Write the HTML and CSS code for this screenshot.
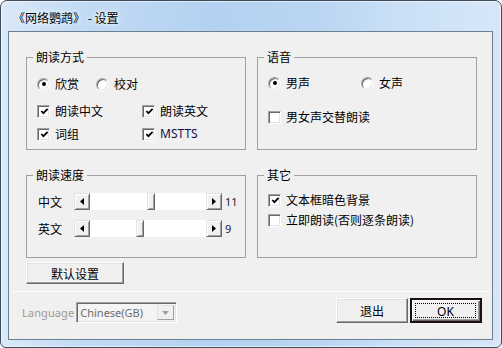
FILE: index.html
```html
<!DOCTYPE html>
<html lang="zh-CN">
<head>
    <meta charset="UTF-8">
    <title>《网络鹦鹉》 - 设置</title>
    <link rel="stylesheet" href="styles.css">
</head>
<body>
    <div class="window">
        <div class="titlebar">
            <span class="title">《网络鹦鹉》 - 设置</span>
        </div>
        <div class="client">
            <div class="groups">
                <!-- 朗读方式 -->
                <fieldset class="group">
                    <legend>朗读方式</legend>
                    <div class="gbody mode">
                        <div class="radios">
                            <label class="opt w59"><span class="radio on"><span class="dot"></span></span>欣赏</label>
                            <label class="opt"><span class="radio"></span>校对</label>
                        </div>
                        <div class="checks">
                            <label class="opt"><span class="check"><svg viewBox="0 0 9 9"><polyline points="1.3,4 3.4,6.2 7.6,1.8"/></svg></span>朗读中文</label>
                            <label class="opt"><span class="check"><svg viewBox="0 0 9 9"><polyline points="1.3,4 3.4,6.2 7.6,1.8"/></svg></span>朗读英文</label>
                            <label class="opt"><span class="check"><svg viewBox="0 0 9 9"><polyline points="1.3,4 3.4,6.2 7.6,1.8"/></svg></span>词组</label>
                            <label class="opt"><span class="check"><svg viewBox="0 0 9 9"><polyline points="1.3,4 3.4,6.2 7.6,1.8"/></svg></span><span class="latin">MSTTS</span></label>
                        </div>
                    </div>
                </fieldset>

                <!-- 语音 -->
                <fieldset class="group">
                    <legend>语音</legend>
                    <div class="gbody voice">
                        <div class="radios">
                            <label class="opt w93"><span class="radio on"><span class="dot"></span></span>男声</label>
                            <label class="opt"><span class="radio"></span>女声</label>
                        </div>
                        <label class="opt alt"><span class="check"></span>男女声交替朗读</label>
                    </div>
                </fieldset>

                <!-- 朗读速度 -->
                <fieldset class="group">
                    <legend>朗读速度</legend>
                    <div class="gbody speed">
                        <div class="slider-row">
                            <span class="slider-label">中文</span>
                            <div class="scrollbar">
                                <span class="arrow"><svg viewBox="0 0 4 7"><polygon points="4,0 4,7 0,3.5"/></svg></span>
                                <div class="track"><span class="thumb" style="margin-left: 57px"></span></div>
                                <span class="arrow"><svg viewBox="0 0 4 7"><polygon points="0,0 0,7 4,3.5"/></svg></span>
                            </div>
                            <span class="value">11</span>
                        </div>
                        <div class="slider-row">
                            <span class="slider-label">英文</span>
                            <div class="scrollbar">
                                <span class="arrow"><svg viewBox="0 0 4 7"><polygon points="4,0 4,7 0,3.5"/></svg></span>
                                <div class="track"><span class="thumb" style="margin-left: 46px"></span></div>
                                <span class="arrow"><svg viewBox="0 0 4 7"><polygon points="0,0 0,7 4,3.5"/></svg></span>
                            </div>
                            <span class="value">9</span>
                        </div>
                    </div>
                </fieldset>

                <!-- 其它 -->
                <fieldset class="group">
                    <legend>其它</legend>
                    <div class="gbody other">
                        <label class="opt"><span class="check"><svg viewBox="0 0 9 9"><polyline points="1.3,4 3.4,6.2 7.6,1.8"/></svg></span>文本框暗色背景</label>
                        <label class="opt"><span class="check"></span>立即朗读(否则逐条朗读)</label>
                    </div>
                </fieldset>
            </div>

            <button class="btn btn-defaults">默认设置</button>

            <div class="separator"></div>

            <div class="footer">
                <div class="lang">
                    <span class="lang-label">Language</span>
                    <div class="combo">
                        <span class="combo-text">Chinese(GB)</span>
                        <span class="combo-btn"><svg viewBox="0 0 7 4"><polygon points="0,0 7,0 3.5,4"/></svg></span>
                    </div>
                </div>
                <div class="actions">
                    <button class="btn">退出</button>
                    <button class="btn ok"><span class="focus">OK</span></button>
                </div>
            </div>
        </div>
    </div>
</body>
</html>
```

FILE: styles.css
```css
body {
    margin: 0;
    font-family: "Noto Sans CJK SC", "Noto Sans", sans-serif;
    font-size: 12px;
    color: #000;
}

.window {
    width: 502px;
    height: 348px;
    box-sizing: border-box;
    border: 1px solid #3e4b5a;
    border-radius: 7px 7px 6px 6px;
    background: linear-gradient(90deg, #dae9f8 0%, #c4dcf4 14%, #b3d1f1 42%, #b9d5f2 62%, #cde2f7 84%, #d7e7f8 100%);
    box-shadow: inset 0 0 0 1px rgba(255, 255, 255, 0.55);
    display: flex;
    flex-direction: column;
    overflow: hidden;
}

.titlebar {
    height: 30px;
    box-sizing: border-box;
    padding: 3px 0 0 12px;
    display: flex;
    align-items: center;
}

.title {
    line-height: 16px;
    text-shadow: 0 0 6px #fff, 0 0 3px #fff;
}

.client {
    flex: 1;
    margin: 0 8px 7px 7px;
    border: 1px solid #6e7f91;
    background: #f0f0f0;
    padding: 18px 15px 0 17px;
    display: flex;
    flex-direction: column;
    align-items: flex-start;
}

/* group boxes */
.groups {
    display: grid;
    grid-template-columns: 220px 220px;
    grid-template-rows: 100px 90px;
    column-gap: 11px;
    row-gap: 18px;
}

.group {
    margin: 0;
    padding: 0 0 0 10px;
    min-width: 0;
    box-sizing: border-box;
    border: 1px solid #a0a0a0;
}

.group legend {
    margin-left: -4px;
    padding: 0 3px;
    line-height: 14px;
}

.opt {
    display: flex;
    align-items: center;
    gap: 5px;
    height: 16px;
    line-height: 16px;
    white-space: nowrap;
}

.w59 { width: 59px; }
.w93 { width: 93px; }

.radios {
    display: flex;
}

.mode { padding-top: 12px; }

.checks {
    margin-top: 11px;
    display: grid;
    grid-template-columns: 105px auto;
    row-gap: 7px;
}

.voice { padding-top: 11px; }

.voice .alt { margin-top: 18px; }

.other {
    padding-top: 10px;
    display: flex;
    flex-direction: column;
    gap: 4px;
}

.latin {
    font-family: "Noto Sans", sans-serif;
    color: #10104a;
}

/* radio + checkbox, classic look */
.radio {
    width: 13px;
    height: 13px;
    box-sizing: border-box;
    border-radius: 50%;
    border: 1px solid;
    border-color: #a0a0a0 #fff #fff #a0a0a0;
    box-shadow: inset 1px 1px 0 #696969, inset -1px -1px 0 #e3e3e3;
    background: #fff;
    display: flex;
    align-items: center;
    justify-content: center;
}

.radio .dot {
    width: 4px;
    height: 4px;
    border-radius: 50%;
    background: #000;
}

.check {
    width: 13px;
    height: 13px;
    box-sizing: border-box;
    border: 1px solid;
    border-color: #a0a0a0 #fff #fff #a0a0a0;
    box-shadow: inset 1px 1px 0 #696969, inset -1px -1px 0 #e3e3e3;
    background: #fff;
    display: flex;
    align-items: center;
    justify-content: center;
}

.check svg {
    width: 9px;
    height: 9px;
    margin: 1px 0 0 1px;
}

.check polyline {
    fill: none;
    stroke: #000;
    stroke-width: 1.7;
}

/* speed sliders */
.speed {
    padding: 11px 0 0 1px;
    display: flex;
    flex-direction: column;
    gap: 10px;
}

.slider-row {
    display: flex;
    align-items: center;
    height: 17px;
}

.slider-label {
    width: 36px;
}

.scrollbar {
    display: flex;
    width: 148px;
    height: 17px;
}

.arrow,
.thumb {
    height: 17px;
    box-sizing: border-box;
    background: #f0f0f0;
    border: 1px solid;
    border-color: #e3e3e3 #696969 #696969 #e3e3e3;
    box-shadow: inset 1px 1px 0 #fff, inset -1px -1px 0 #a0a0a0;
}

.arrow {
    width: 16px;
    display: flex;
    align-items: center;
    justify-content: center;
}

.arrow svg {
    width: 4px;
    height: 7px;
}

.track {
    flex: 1;
    background: #fff;
    display: flex;
}

.thumb {
    width: 8px;
}

.value {
    margin-left: 3px;
    font-family: "Noto Sans", sans-serif;
    font-size: 11px;
    color: #1a1a40;
}

/* buttons */
.btn {
    font-family: inherit;
    font-size: 12px;
    color: #000;
    background: #f0f0f0;
    border: 1px solid;
    border-color: #fff #696969 #696969 #fff;
    box-shadow: inset -1px -1px 0 #a0a0a0, inset 1px 1px 0 #e3e3e3;
    padding: 0;
    width: 72px;
    height: 25px;
}

.btn-defaults {
    margin-top: 4px;
    width: 98px;
    height: 22px;
}

.ok {
    outline: 1px solid #1a1010;
    outline-offset: -1px;
    border-width: 2px;
    border-color: #1a1010 #1a1010 #1a1010 #1a1010;
    box-shadow: inset 1px 1px 0 #fff, inset -1px -1px 0 #696969, inset -2px -2px 0 #a0a0a0;
    display: flex;
    padding: 3px 4px 3px 3px;
}

.ok .focus {
    flex: 1;
    border: 1px dotted #000;
    font-family: "Noto Sans", sans-serif;
    line-height: 15px;
}

.separator {
    align-self: stretch;
    height: 1px;
    margin: 7px -14px 0 -15px;
    background: #fdfdf0;
}

/* language + dialog buttons */
.footer {
    align-self: stretch;
    display: flex;
    justify-content: space-between;
    margin: 0 -5px 0 -4px;
}

.lang {
    margin-top: 10px;
    display: flex;
    align-items: center;
    gap: 2px;
    height: 21px;
}

.lang-label {
    font-family: "Noto Sans", sans-serif;
    font-size: 11px;
    letter-spacing: 0.1px;
    color: #a09a94;
}

.combo {
    width: 101px;
    height: 21px;
    box-sizing: border-box;
    border: 1px solid;
    border-color: #a0a0a0 #fff #fff #a0a0a0;
    box-shadow: inset 1px 1px 0 #696969, inset -1px -1px 0 #e3e3e3;
    background: #f4f4f4;
    display: flex;
    align-items: center;
    padding: 2px 2px 2px 3px;
}

.combo-text {
    flex: 1;
    font-family: "Noto Sans", sans-serif;
    font-size: 11px;
    color: #6d6d6d;
}

.combo-btn {
    width: 17px;
    height: 15px;
    box-sizing: border-box;
    background: #f0f0f0;
    border: 1px solid;
    border-color: #e3e3e3 #a0a0a0 #a0a0a0 #e3e3e3;
    display: flex;
    align-items: center;
    justify-content: center;
}

.combo-btn svg {
    width: 7px;
    height: 4px;
    fill: #a0a0a0;
}

.actions {
    margin-top: 6px;
    display: flex;
    gap: 2px;
}
```
